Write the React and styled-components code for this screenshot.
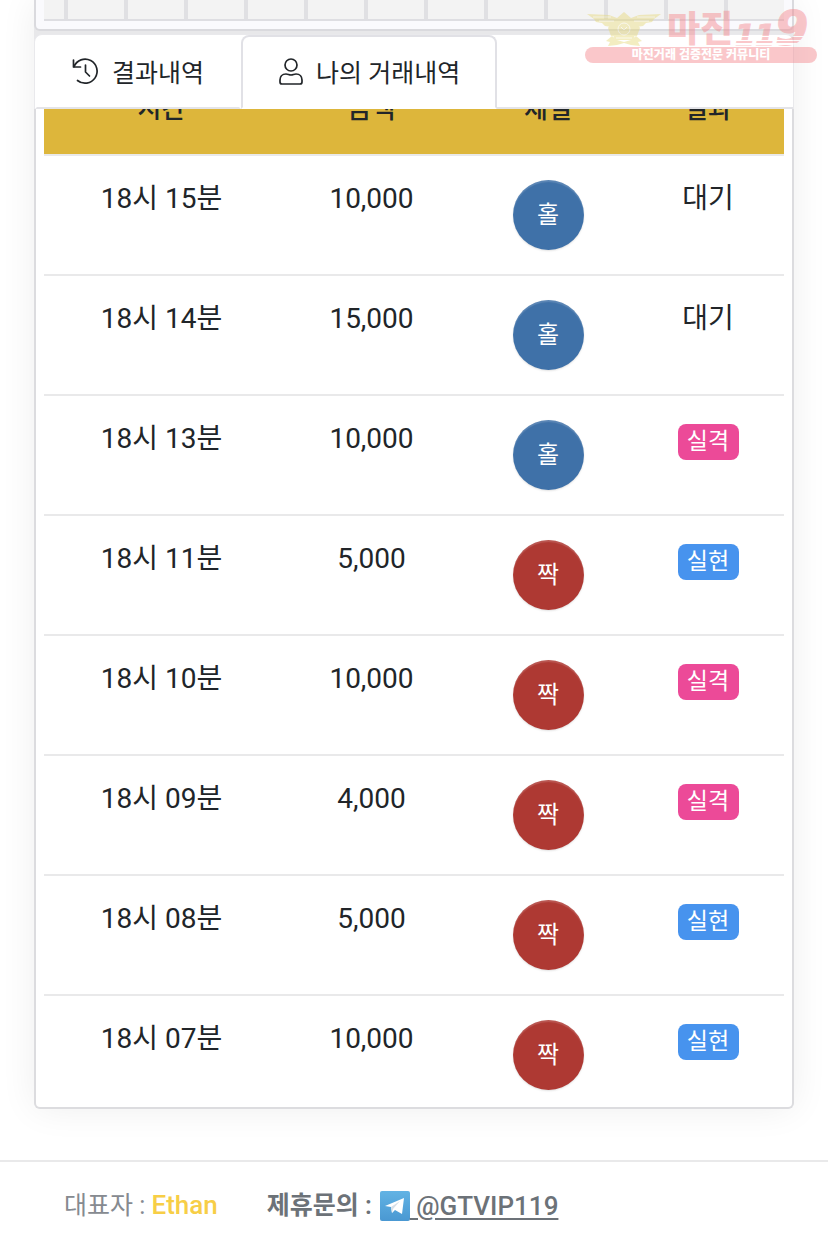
import React from 'react'
import styled, { createGlobalStyle, css } from 'styled-components'

const GlobalStyle = createGlobalStyle`
*{
  box-sizing:border-box;
}
body{
  margin:0;
  background:#fff;
  color:#212529;
  font-family:Roboto, 'Noto Sans CJK KR', sans-serif;
  font-size:28px;
  overflow:hidden;
}
`

const Page = styled.div`
position:relative;
`

const Content = styled.main`
padding:0 34px;
`

const Stack = styled.div`
box-shadow:0 0 36px rgba(0,0,0,0.07);
border-radius:8px;
background:#e8e8ea;
`

const Board = styled.section`
background:#fafafd;
border:2px solid #dadade;
border-top:none;
border-radius:0 0 6px 6px;
padding:0 8px 8px;
`

const BoardGrid = styled.div`
height:21px;
background:repeating-linear-gradient(90deg, #f3f3f3 0 20px, #e0e0e3 20px 24px, #f3f3f3 24px 60px);
border-bottom:2px solid #dedee2;
`

const Tabs = styled.div`
display:flex;
margin-top:3px;
background:#fff;
border:1px solid #e9e9ec;
border-bottom:none;
border-radius:8px 8px 0 0;
`

const Tab = styled.button`
display:flex;
align-items:center;
gap:12px;
height:74px;
padding:0 35px 3px;
border:2px solid transparent;
border-bottom-color:#e4e4e8;
background:transparent;
color:#212529;
font-family:inherit;
font-size:25px;
white-space:nowrap;
cursor:pointer;
${props => props.$active && css`
  border-color:#e1e1e6;
  border-bottom-color:transparent;
  border-radius:8px 8px 0 0;
`}
`

const TabsRest = styled.div`
flex:1;
border-bottom:2px solid #e4e4e8;
`

const Panel = styled.section`
background:#fff;
border:2px solid #dcdcdf;
border-top:none;
border-radius:0 0 6px 6px;
padding:0 8px;
height:1000px;
overflow:hidden;
`

const Table = styled.table`
width:100%;
margin-top:-28px;
border-collapse:collapse;
table-layout:fixed;
text-align:center;
`

const Head = styled.th`
width:${props => props.$width};
height:74px;
padding:0 0 25px;
background:#ddb63b;
border-bottom:2px solid #e9e9ea;
font-size:26px;
font-weight:500;
line-height:40px;
vertical-align:bottom;
`

const Cell = styled.td`
height:120px;
padding:23px 0 0;
border-bottom:2px solid #e9e9ea;
line-height:40px;
vertical-align:top;
`

const Ball = styled.span`
display:flex;
align-items:center;
justify-content:center;
width:71px;
height:70px;
margin:1px auto 0;
border-radius:50%;
background:${props => props.$even ? '#ae3933' : '#3f71a8'};
box-shadow:inset 0 2px 1px rgba(255,255,255,0.15), 0 1px 2px rgba(0,0,0,0.12);
color:#fff;
font-size:24px;
line-height:36px;
`

const Badge = styled.span`
display:block;
width:61px;
height:36px;
margin:5px auto 0;
border-radius:8px;
background:${props => props.$win ? '#4793ee' : '#ec4a98'};
color:#fff;
font-size:23px;
line-height:36px;
`

const Footer = styled.footer`
display:flex;
align-items:center;
gap:49px;
margin-top:51px;
padding:23px 64px;
border-top:2px solid #e9e9ea;
color:#868a90;
font-size:25px;
line-height:40px;
white-space:nowrap;
`

const Owner = styled.strong`
color:#f7ce46;
font-size:26px;
font-weight:500;
`

const Inquiry = styled.div`
display:flex;
align-items:center;
gap:8px;
color:#6c7278;
font-weight:600;
`

const Telegram = styled.a`
display:flex;
align-items:center;
color:inherit;
font-size:26px;
font-weight:500;
white-space:pre;
text-underline-offset:3px;
`

const Watermark = styled.div`
position:absolute;
top:8px;
left:585px;
width:232px;
opacity:0.45;
pointer-events:none;
`

const MarkTop = styled.div`
display:flex;
align-items:flex-end;
height:39px;
color:#f4858b;
font-weight:900;
white-space:nowrap;
`

const MarkName = styled.span`
margin-left:4px;
font-size:36px;
line-height:34px;
`

const MarkBanner = styled.div`
height:16px;
border-radius:8px;
background:#f4858b;
color:#fff;
font-size:12px;
font-weight:900;
line-height:16px;
text-align:center;
`

const HistoryIcon = () => (
  <svg width="28" height="28" viewBox="0 0 28 28" fill="none" stroke="#212529" strokeWidth="1.7" strokeLinecap="round" strokeLinejoin="round">
    <path d="M1.500 3v7h7" />
    <path d="M2 9.600A12 12 0 1 1 5.500 23.500" />
    <path d="M13.500 8v7l4 4" />
  </svg>
)

const PersonIcon = () => (
  <svg width="26" height="28" viewBox="0 0 26 28" fill="none" stroke="#212529" strokeWidth="1.7" strokeLinejoin="round">
    <circle cx="13" cy="8" r="6" />
    <path d="M8 17c2 0 3 1 5 1s3-1 5-1c4 0 6 3 6 6v2c0 1-.8 2-2 2H4c-1.200 0-2-1-2-2v-2c0-3 2-6 6-6z" />
  </svg>
)

const TelegramIcon = () => (
  <svg width="30" height="30" viewBox="0 0 30 30">
    <defs>
      <linearGradient id="sky" x1="0" y1="0" x2="0" y2="1">
        <stop offset="0" stopColor="#62b3e4" />
        <stop offset="1" stopColor="#4a98d2" />
      </linearGradient>
    </defs>
    <rect width="30" height="30" rx="2" fill="url(#sky)" />
    <path d="M5 15 24 7l-2 16-7-4-3 3-1-6z" fill="#fff" />
    <path d="m11 16 9-6-7 8-1 4z" fill="#d6dfe8" />
  </svg>
)

const EagleLogo = () => (
  <svg width="78" height="38" viewBox="0 0 78 38" fill="#e6d878">
    <path d="M2 5l22 1 8 3 7-6 7 6 8-3 22-1-7 5-2 3-6 1-3 3-7 1H27l-7-1-3-3-6-1-2-3z" />
    <path d="M26 14h26l3 5-3 8H26l-3-8z" />
    <path d="M28 26h22l-2 5H30z" />
    <path d="M21 32l6-5 5 4 7 2 7-2 5-4 6 5-4 1 2 4-9-1-7-2-7 2-9 1 2-4z" />
    <g fill="none" stroke="#fff" strokeWidth="1" opacity="0.7">
      <circle cx="39" cy="20" r="6" />
      <path d="M8 8h18M52 8h18M14 12h15M49 12h15M36 18l3 3 3-3M31 29h16" />
    </g>
  </svg>
)

const NumberMark = () => (
  <svg width="80" height="39" viewBox="0 0 80 39" fill="url(#speed)" stroke="url(#speed)" strokeWidth="1" fontFamily="DejaVu Sans" fontWeight="700" fontStyle="italic">
    <defs>
      <linearGradient id="speed" gradientUnits="userSpaceOnUse" x1="0" y1="0" x2="0" y2="39">
        <stop offset="0.72" stopColor="#f4858b" />
        <stop offset="0.72" stopColor="#fff" />
        <stop offset="0.75" stopColor="#fff" />
        <stop offset="0.75" stopColor="#f4858b" />
        <stop offset="0.82" stopColor="#f4858b" />
        <stop offset="0.82" stopColor="#fff" />
        <stop offset="0.85" stopColor="#fff" />
        <stop offset="0.85" stopColor="#f4858b" />
        <stop offset="0.91" stopColor="#f4858b" />
        <stop offset="0.91" stopColor="#fff" />
        <stop offset="0.94" stopColor="#fff" />
        <stop offset="0.94" stopColor="#f4858b" />
      </linearGradient>
    </defs>
    <text x="2" y="37" fontSize="29">11</text>
    <text x="42" y="37" fontSize="48">9</text>
  </svg>
)

const rows = [
  { time: '18시 15분', amount: '10,000', pick: '홀', result: '대기' },
  { time: '18시 14분', amount: '15,000', pick: '홀', result: '대기' },
  { time: '18시 13분', amount: '10,000', pick: '홀', result: '실격' },
  { time: '18시 11분', amount: '5,000', pick: '짝', result: '실현' },
  { time: '18시 10분', amount: '10,000', pick: '짝', result: '실격' },
  { time: '18시 09분', amount: '4,000', pick: '짝', result: '실격' },
  { time: '18시 08분', amount: '5,000', pick: '짝', result: '실현' },
  { time: '18시 07분', amount: '10,000', pick: '짝', result: '실현' },
]

const Row = ({ row }) => (
  <tr>
    <Cell>{row.time}</Cell>
    <Cell>{row.amount}</Cell>
    <Cell><Ball $even={row.pick === '짝'}>{row.pick}</Ball></Cell>
    <Cell>
      {row.result === '대기' ? row.result : <Badge $win={row.result === '실현'}>{row.result}</Badge>}
    </Cell>
  </tr>
)

const App = () => {
  return (
    <Page>
      <GlobalStyle />
      <Content>
        <Stack>
          <Board>
            <BoardGrid />
          </Board>
          <Tabs>
            <Tab type="button"><HistoryIcon />결과내역</Tab>
            <Tab type="button" $active><PersonIcon />나의 거래내역</Tab>
            <TabsRest />
          </Tabs>
          <Panel>
            <Table>
              <thead>
                <tr>
                  <Head $width="235px">시간</Head>
                  <Head $width="25%">금액</Head>
                  <Head $width="168px">체결</Head>
                  <Head>결과</Head>
                </tr>
              </thead>
              <tbody>
                {rows.map(row => <Row key={row.time} row={row} />)}
              </tbody>
            </Table>
          </Panel>
        </Stack>
      </Content>
      <Footer>
        <div>대표자 : <Owner>Ethan</Owner></div>
        <Inquiry>
          제휴문의 :
          <Telegram href="#telegram"><TelegramIcon /> @GTVIP119</Telegram>
        </Inquiry>
      </Footer>
      <Watermark>
        <MarkTop>
          <EagleLogo />
          <MarkName>마진</MarkName>
          <NumberMark />
        </MarkTop>
        <MarkBanner>마진거래 검증전문 커뮤니티</MarkBanner>
      </Watermark>
    </Page>
  )
}

export default App
